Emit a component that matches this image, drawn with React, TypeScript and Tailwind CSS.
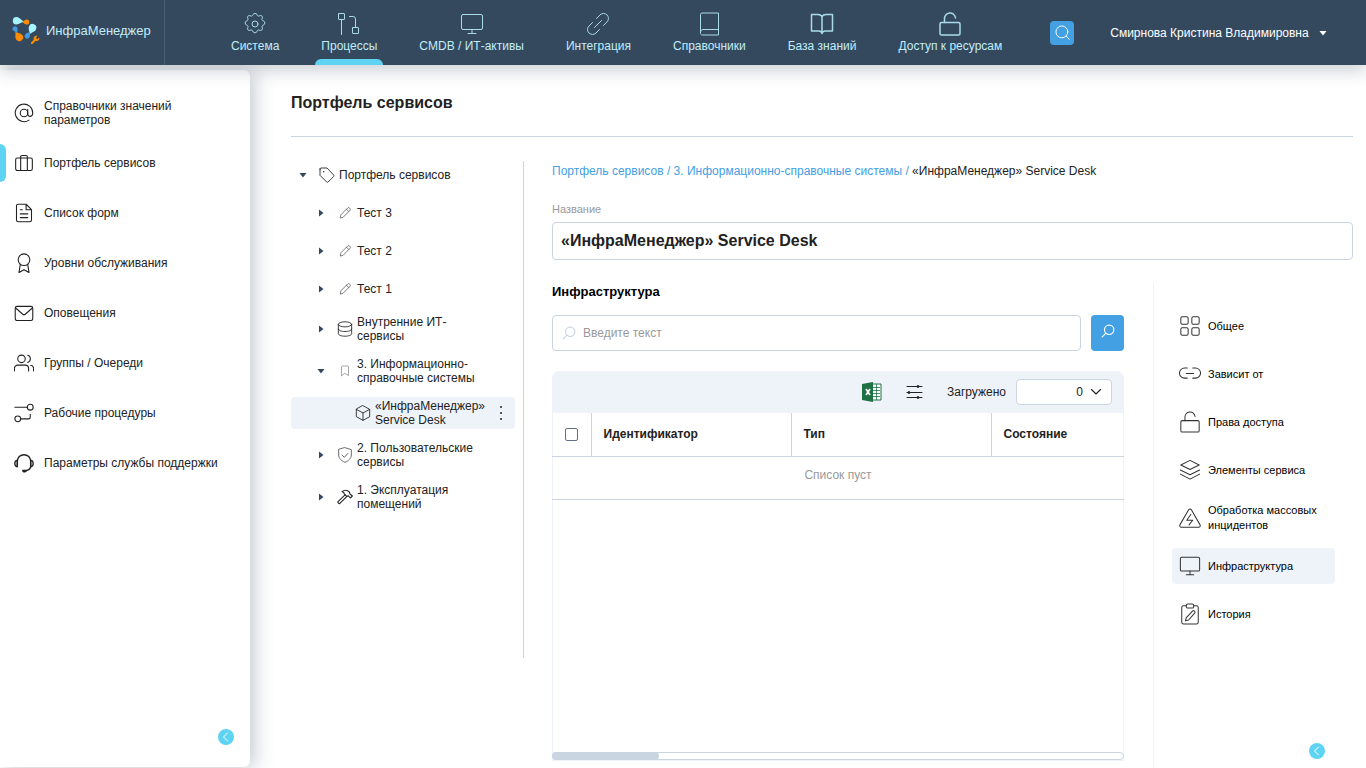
import { useState, type ReactNode } from 'react';
import clsx from 'clsx';

function Icon({ size = 24, width = 1, className, children }: {
  size?: number;
  width?: number;
  className?: string;
  children: ReactNode;
}) {
  return (
    <svg
      width={size}
      height={size}
      viewBox="0 0 24 24"
      fill="none"
      stroke="currentColor"
      strokeWidth={width}
      strokeLinecap="round"
      strokeLinejoin="round"
      className={clsx('shrink-0', className)}
      aria-hidden="true"
    >
      {children}
    </svg>
  );
}

const gear = (
  <>
    <circle cx="12" cy="12" r="3" />
    <path d="M10.2 2.2c.5-1 3.100-1 3.600 0l.5 1.100c.3.700 1.100 1 1.800.7l1.100-.4c1.300-.4 2.600.9 2.200 2.200l-.4 1.100c-.3.700.1 1.500.8 1.800l1.100.5c1.200.6 1.200 3 0 3.600l-1.100.5c-.7.3-1 1.100-.8 1.800l.4 1.100c.4 1.300-.9 2.600-2.200 2.200l-1.100-.4c-.7-.3-1.500.1-1.800.8l-.5 1.100c-.6 1.200-3 1.200-3.600 0l-.5-1.100c-.3-.7-1.100-1-1.800-.8l-1.100.4c-1.300.4-2.600-.9-2.200-2.200l.4-1.100c.3-.7-.1-1.500-.8-1.800l-1.100-.5c-1.200-.6-1.200-3 0-3.600l1.100-.5c.7-.3 1-1.100.8-1.800l-.4-1.100c-.4-1.300.9-2.600 2.200-2.200l1.100.4c.7.3 1.500 0 1.800-.7z" />
  </>
);

const flow = (
  <>
    <rect x="1.500" y="1.500" width="6" height="6" rx=".5" />
    <rect x="15.500" y="15.500" width="6" height="6" rx=".5" />
    <path d="M4.500 7.500v15M12.500 4.500h3.500a2.500 2.500 0 0 1 2.500 2.500v8.500" />
  </>
);

const monitor = (
  <>
    <rect x="1.500" y="2.500" width="21" height="15" rx="1.500" />
    <path d="M12 17.500v4M8 21.500h8" />
  </>
);

const chain = (
  <path d="M8.500 15.500l7-7M10.500 6.500l3.500-3.600a4.900 4.900 0 0 1 7 7l-3.500 3.600M6.500 10.500L3 14a4.900 4.900 0 0 0 7 7l3.500-3.500" />
);

const book = (
  <path d="M3.500 20.500V2.500a1.500 1.500 0 0 1 1.500-1.500h16.500v22H5.500a2 2 0 0 1-2-2.500c0-1.500 1-3 2.500-3h15.500" />
);

const openBook = (
  <path d="M12 4.500c-1-1.500-2.500-2-4-2H1.500v16.500H9c1.800 0 2.500 1 3 2.500.5-1.500 1.200-2.500 3-2.500h7.500V2.500H16c-1.500 0-3 .5-4 2v17" />
);

const unlock = (
  <>
    <rect x="2" y="10.500" width="20" height="12.500" rx="1.500" />
    <path d="M6.500 10.500V7a5.500 5.500 0 0 1 11-1" />
  </>
);

const layers = (
  <path d="M12 1.500l10 5-10 5-10-5zM1.500 12L12 17.200 22.500 12M1.500 16.500L12 22l10.500-5.500" />
);

const topNav = [
  { label: 'Система', icon: gear },
  { label: 'Процессы', icon: flow, active: true },
  { label: 'CMDB / ИТ-активы', icon: monitor },
  { label: 'Интеграция', icon: chain },
  { label: 'Справочники', icon: book },
  { label: 'База знаний', icon: openBook, bold: true },
  { label: 'Доступ к ресурсам', icon: unlock, bold: true },
];

const sideNav = [
  {
    label: 'Справочники значений параметров',
    icon: (
      <>
        <circle cx="12" cy="12" r="4.500" />
        <path d="M16.500 7.500V13c0 4.500 6 4 6-1A10.500 10.500 0 1 0 18 20.500" />
      </>
    ),
  },
  {
    label: 'Портфель сервисов',
    active: true,
    icon: (
      <>
        <rect x="2" y="6" width="20" height="15" rx="2" />
        <path d="M8 21V4.500A1.500 1.500 0 0 1 9.500 3h5A1.500 1.500 0 0 1 16 4.500V21" />
      </>
    ),
  },
  {
    label: 'Список форм',
    icon: (
      <path d="M14.500 1.500H5a2 2 0 0 0-2 2v17a2 2 0 0 0 2 2h14a2 2 0 0 0 2-2V8zM14.500 1.500V8H21M7.500 8h2.500M7.500 13h9M7.500 17.500h9" />
    ),
  },
  {
    label: 'Уровни обслуживания',
    icon: (
      <>
        <circle cx="12" cy="8" r="7" />
        <path d="M7.500 13.500L6 23.500l6-3.500 6 3.500-1.500-10" />
      </>
    ),
  },
  {
    label: 'Оповещения',
    icon: (
      <>
        <rect x="1.500" y="4" width="21" height="17" rx="2" />
        <path d="M2 6l8.500 7.500a2.200 2.200 0 0 0 3 0L22 6" />
      </>
    ),
  },
  {
    label: 'Группы / Очереди',
    icon: (
      <>
        <circle cx="9" cy="7" r="4.500" />
        <path d="M.5 21.500v-3a4 4 0 0 1 4-4h9a4 4 0 0 1 4 4v3M16.500 2.700a4.500 4.500 0 0 1 0 8.600M20 14.800a4 4 0 0 1 3.500 4v2.700" />
      </>
    ),
  },
  {
    label: 'Рабочие процедуры',
    icon: (
      <>
        <circle cx="19.500" cy="5" r="3.500" />
        <circle cx="4.500" cy="19" r="3.500" />
        <path d="M1 5h15M8 19h9.500a2 2 0 0 0 2-2v-3.500" />
      </>
    ),
  },
  {
    label: 'Параметры службы поддержки',
    icon: (
      <>
        <path strokeWidth="1.700" d="M4 16V10a8 8 0 0 1 16 0v6c0 3-2 4.500-5 5" />
        <path strokeWidth="1.600" d="M4 8.500C0 9 0 16 4 16.500zM20 8.500c4 .5 4 7.500 0 8zM10.500 21h4c1 1.500-4 2.500-4 0z" />
      </>
    ),
  },
];

const pencil = <path d="M4 20l1-5L17 3c1.500-1.500 5.500 2.500 4 4L9 19zM14.500 5.500l4 4" />;

type TreeItem = {
  label: string;
  level: number;
  open?: boolean;
  leaf?: boolean;
  selected?: boolean;
  icon: ReactNode;
  size: number;
  tone?: string;
};

const tree: TreeItem[] = [
  {
    label: 'Портфель сервисов',
    level: 0,
    open: true,
    size: 16,
    icon: (
      <>
        <path d="M1.500 3v9.500l10 10c.7.700 1.500.7 2.200 0l8.300-8.300c.7-.7.7-1.500 0-2.200L12 1.500H3A1.500 1.500 0 0 0 1.500 3z" />
        <path strokeWidth="2" d="M7 7v.1" />
      </>
    ),
  },
  { label: 'Тест 3', level: 1, size: 14, icon: pencil, tone: 'text-[#555]' },
  { label: 'Тест 2', level: 1, size: 14, icon: pencil, tone: 'text-[#555]' },
  { label: 'Тест 1', level: 1, size: 14, icon: pencil, tone: 'text-[#555]' },
  {
    label: 'Внутренние ИТ-сервисы',
    level: 1,
    size: 16,
    icon: (
      <>
        <ellipse cx="12" cy="5" rx="10" ry="3.800" />
        <path d="M2 5v14c0 2.200 4.500 3.800 10 3.800s10-1.600 10-3.800V5M2 12c0 2.200 4.500 3.800 10 3.800s10-1.600 10-3.800" />
      </>
    ),
  },
  {
    label: '3. Информационно-справочные системы',
    level: 1,
    open: true,
    size: 12,
    tone: 'text-[#777]',
    icon: <path d="M5 21V4a2 2 0 0 1 2-2h10a2 2 0 0 1 2 2v17l-7-4z" />,
  },
  {
    label: '«ИнфраМенеджер» Service Desk',
    level: 2,
    leaf: true,
    selected: true,
    size: 16,
    icon: <path d="M12 1l10 5.500v11L12 23 2 17.500v-11zM2 6.500L12 12l10-5.500M12 12v11" />,
  },
  {
    label: '2. Пользовательские сервисы',
    level: 1,
    size: 16,
    tone: 'text-[#555]',
    icon: <path d="M12 1l9.500 3v8c0 5-4.500 9-9.500 11-5-2-9.500-6-9.500-11V4zM7.500 12l3.500 3.500 5.500-6" />,
  },
  {
    label: '1. Эксплуатация помещений',
    level: 1,
    size: 16,
    icon: (
      <path
        strokeWidth="1.600"
        d="M12.500 8.500L1.500 19c-.8 1 1.500 3.500 2.700 2.700L15 11M7.500 4c4-3 8-2.500 11 .5l1 3 3.500 3-3 3-3-3.200-2.500.7-4-4C11 5.500 9.500 4.500 7.500 4z"
      />
    ),
  },
];

const sections = [
  {
    label: 'Общее',
    icon: (
      <>
        <rect x="2" y="2" width="8" height="8" rx="1.500" />
        <rect x="14" y="2" width="8" height="8" rx="1.500" />
        <rect x="2" y="14" width="8" height="8" rx="1.500" />
        <rect x="14" y="14" width="8" height="8" rx="1.500" />
      </>
    ),
  },
  {
    label: 'Зависит от',
    icon: <path d="M9 5.500H6a5.500 5.500 0 0 0 0 11h3M15 5.500h3a5.500 5.500 0 0 1 0 11h-3M8 11.500h8" />,
  },
  { label: 'Права доступа', icon: unlock },
  { label: 'Элементы сервиса', icon: layers },
  {
    label: 'Обработка массовых инцидентов',
    icon: (
      <path d="M10.500 3a1.800 1.800 0 0 1 3 0l9.500 16.500a1.700 1.700 0 0 1-1.500 2.500h-19A1.700 1.700 0 0 1 1 19.500zM13 8l-4.500 6.500H15L11 19.500" />
    ),
  },
  { label: 'Инфраструктура', icon: monitor, active: true },
  {
    label: 'История',
    icon: (
      <>
        <path d="M8 3H5a2 2 0 0 0-2 2v16a2 2 0 0 0 2 2h14a2 2 0 0 0 2-2V5a2 2 0 0 0-2-2h-3" />
        <rect x="8" y="1" width="8" height="4.500" rx="1.500" />
        <path d="M7 19.500l1-3.500 7-7.500c1-1 3.300 1 2.300 2.200L10.500 18.500z" />
      </>
    ),
  },
];

// Teardrop: a round end of radius r with its tip `len` away, turned by `angle`
function Drop({ x, y, r, len, angle, fill }: {
  x: number;
  y: number;
  r: number;
  len: number;
  angle: number;
  fill: string;
}) {
  const d = `M${len} 0C${len * 0.7} 0 ${r * 0.8} ${r} 0 ${r}A${r} ${r} 0 0 1 0 ${-r}C${r * 0.8} ${-r} ${len * 0.7} 0 ${len} 0z`;
  return <path d={d} fill={fill} transform={`translate(${x} ${y}) rotate(${angle})`} />;
}

function Logo() {
  return (
    <svg width="30" height="30" viewBox="0 0 30 30" className="shrink-0" aria-hidden="true">
      <Drop x={5.5} y={4.700} r={3.700} len={8} angle={5} fill="#a5f3fc" />
      <Drop x={15.700} y={6} r={2.600} len={5} angle={180} fill="#ff8c00" />
      <Drop x={21.500} y={11.800} r={3.800} len={7.500} angle={115} fill="#a5f3fc" />
      <Drop x={16.300} y={20} r={2.600} len={5.500} angle={-60} fill="#4299e1" />
      <Drop x={8.300} y={21.300} r={3.800} len={7.500} angle={-125} fill="#ff8c00" />
      <Drop x={4} y={12.800} r={2.500} len={5.500} angle={60} fill="#4299e1" />
      <path
        d="M28.200 21.500l-2 1.700-1.300-1.300 1.500-2.200c-2.600-.5-4.400 1.700-3.600 4L20 26.500c-.4 1.300.4 2 1.500 1.500l3-3c2.500.6 4.500-1.200 3.700-3.500z"
        fill="#ff8c00"
      />
    </svg>
  );
}

function ExcelIcon() {
  return (
    <svg width="20" height="22" viewBox="0 0 20 22" aria-hidden="true">
      <path d="M10 3h9v16h-9z" fill="#fff" stroke="#1e7145" />
      <path d="M10 6.500h8M10 9.500h8M10 12.500h8M10 15.500h8M14.500 3v16" stroke="#1e7145" strokeWidth=".8" />
      <path d="M0 3L11 1v20L0 19z" fill="#1e7145" />
      <path d="M4 8l4 6M8 8l-4 6" stroke="#fff" strokeWidth="1.600" />
    </svg>
  );
}

function CollapseButton({ label }: { label: string }) {
  return (
    <button type="button" aria-label={label} className="flex size-4 items-center justify-center rounded-full bg-[#5fd4f2] text-white">
      <Icon size={12} width={2}>
        <path d="M15 4l-8 8 8 8" />
      </Icon>
    </button>
  );
}

function Magnifier({ size, className }: { size: number; className?: string }) {
  return (
    <Icon size={size} width={2} className={className}>
      <circle cx="14" cy="10" r="8" />
      <path d="M8.500 15.500L2 22" />
    </Icon>
  );
}

function TreeCaret({ open }: { open?: boolean }) {
  return (
    <svg width="8" height="8" viewBox="0 0 8 8" fill="#34495e" aria-hidden="true">
      <path d={open ? 'M.5 2h7L4 6.500z' : 'M2 .5v7L6.500 4z'} />
    </svg>
  );
}

function Header() {
  return (
    <header className="relative z-10 flex h-[65px] shrink-0 bg-[#34495e] shadow-[0_6px_16px_rgba(52,73,94,0.25)]">
      <a href="#home" className="flex w-[165px] shrink-0 items-center gap-[5px] border-r border-[#475d73] pb-1 pl-[11px] text-[13px] text-[#c4ecf7]">
        <Logo />
        ИнфраМенеджер
      </a>
      <nav className="ml-[60px] flex gap-[30px]">
        {topNav.map((item) => (
          <a
            key={item.label}
            href="#section"
            className="relative flex flex-col items-center gap-0.5 px-1.5 pt-3 text-xs whitespace-nowrap text-[#c0edfa]"
          >
            <Icon width={item.bold ? 1.5 : 1} className="text-[#a9dbea]">{item.icon}</Icon>
            {item.label}
            {item.active && <span className="absolute inset-x-0 bottom-0 h-1.5 rounded-t-md bg-[#5fd4f2]" />}
          </a>
        ))}
      </nav>
      <button
        type="button"
        aria-label="Поиск"
        className="ml-[42px] flex size-6 shrink-0 items-center justify-center self-center rounded-sm bg-[#43a0e3] text-white"
      >
        <Icon size={15} width={1.5}>
          <circle cx="11" cy="11" r="9.500" />
          <path d="M18 18l5 5" />
        </Icon>
      </button>
      <button type="button" className="ml-9 flex items-center gap-2.5 text-xs whitespace-nowrap text-white">
        Смирнова Кристина Владимировна
        <svg width="8" height="8" viewBox="0 0 8 8" fill="currentColor" aria-hidden="true">
          <path d="M.5 2h7L4 6.500z" />
        </svg>
      </button>
    </header>
  );
}

function Sidebar() {
  return (
    <aside className="mt-[5px] mb-px flex w-[250px] shrink-0 flex-col rounded-r-md bg-white pt-[18px] shadow-[4px_2px_20px_rgba(52,73,94,0.3)]">
      <nav>
        {sideNav.map((item) => (
          <a key={item.label} href="#item" className="relative flex h-[50px] items-center gap-2.5 pr-4 pl-3.5 text-xs leading-[14px]">
            {item.active && <span className="absolute top-1.5 left-0 h-[38px] w-1.5 rounded-r-md bg-[#5fd4f2]" />}
            <Icon size={20} width={1.3}>{item.icon}</Icon>
            {item.label}
          </a>
        ))}
      </nav>
      <div className="mt-auto flex justify-end pr-4 pb-[22px]">
        <CollapseButton label="Свернуть меню" />
      </div>
    </aside>
  );
}

const indent = ['pl-[3px]', 'pl-[21px]', 'pl-[39px]'];

function ServiceTree() {
  return (
    <div className="h-[497px] w-[233px] shrink-0 border-r border-[#c9d5e1] pr-2">
      <ul className="flex flex-col gap-2.5">
        {tree.map((item) => (
          <li
            key={item.label}
            className={clsx(
              'flex min-h-7 items-center rounded-sm py-0.5 text-xs leading-[14px]',
              indent[item.level],
              item.selected && 'bg-[#eef3fa]',
            )}
          >
            {item.leaf ? (
              <span className="w-[18px]" />
            ) : (
              <button type="button" aria-label="Развернуть" aria-expanded={!!item.open} className="flex w-[18px] justify-center">
                <TreeCaret open={item.open} />
              </button>
            )}
            <span className={clsx('ml-1.5 flex w-[18px] shrink-0 justify-center', item.tone)}>
              <Icon size={item.size} width={1.3}>{item.icon}</Icon>
            </span>
            <a href="#service" className="ml-[3px] min-w-0 flex-1">{item.label}</a>
            {item.selected ? (
              <button type="button" aria-label="Действия" className="flex w-7 justify-center">
                <svg width="4" height="16" viewBox="0 0 4 16" fill="#222" aria-hidden="true">
                  <circle cx="2" cy="2" r="1" />
                  <circle cx="2" cy="8" r="1" />
                  <circle cx="2" cy="14" r="1" />
                </svg>
              </button>
            ) : (
              <span className="w-7 shrink-0" />
            )}
          </li>
        ))}
      </ul>
    </div>
  );
}

function InfrastructureTable() {
  return (
    <div className="mt-5 flex flex-1 flex-col overflow-hidden rounded-t-lg shadow-[inset_0_0_0_1px_#eef3fa]">
      <div className="flex h-[42px] shrink-0 items-center justify-end bg-[#eef3fa] pr-3">
        <button type="button" aria-label="Экспорт в Excel" className="mr-6">
          <ExcelIcon />
        </button>
        <button type="button" aria-label="Настройка колонок" className="mr-6">
          <svg width="17" height="16" viewBox="0 0 17 16" stroke="#222" fill="#222" strokeLinecap="round" aria-hidden="true">
            <path d="M1 2.500h15M1 8.500h15M1 13.500h15" />
            <circle cx="12" cy="2.500" r="1" />
            <circle cx="3" cy="8.500" r="1" />
            <circle cx="12" cy="13.500" r="1" />
          </svg>
        </button>
        <label htmlFor="loaded" className="mr-2.5 text-xs">Загружено</label>
        <div className="relative">
          <select
            id="loaded"
            className="h-[26px] w-24 appearance-none rounded-sm border border-[#c9d5e1] bg-white pr-7 text-xs [text-align-last:right]"
          >
            <option>0</option>
          </select>
          <Icon size={12} width={2.2} className="pointer-events-none absolute top-[7px] right-2.5">
            <path d="M3 7l9 9 9-9" />
          </Icon>
        </div>
      </div>
      <table className="w-full table-fixed text-xs">
        <thead>
          <tr className="h-[43px] border-b border-[#c9d5e1] text-left">
            <th className="w-[39px]">
              <input
                type="checkbox"
                aria-label="Выбрать все"
                className="mx-auto block size-[13px] appearance-none rounded-xs border border-[#5f7285] bg-white"
              />
            </th>
            <th className="w-[200px] border-l border-[#c9d5e1] px-3">Идентификатор</th>
            <th className="w-[200px] border-l border-[#c9d5e1] px-3">Тип</th>
            <th className="border-l border-[#c9d5e1] px-3">Состояние</th>
          </tr>
        </thead>
        <tbody>
          <tr className="h-[43px] border-b border-[#c9d5e1]">
            <td colSpan={4} className="pb-1.5 text-center text-[#999]">Список пуст</td>
          </tr>
        </tbody>
      </table>
      <div className="mt-auto mb-px h-2 rounded-full border border-[#c9d5e1]">
        <div className="-mt-px -ml-px h-2 w-[107px] rounded-full bg-[#c9d5e1]" />
      </div>
    </div>
  );
}

function SectionNav() {
  return (
    <aside className="ml-[29px] flex w-[200px] shrink-0 flex-col border-l border-[#f0f2f5] pt-[25px] pr-[18px] pl-[18px]">
      <nav className="flex flex-col gap-3">
        {sections.map((item) => (
          <a
            key={item.label}
            href="#tab"
            className={clsx(
              'flex h-9 items-center gap-2 rounded-sm pr-1 pl-[7px] text-[11px] leading-[15px] text-black',
              item.active && 'bg-[#eef3fa]',
            )}
          >
            <Icon size={22} width={1.1} className="-mr-px text-[#333]">{item.icon}</Icon>
            {item.label}
          </a>
        ))}
      </nav>
      <div className="mt-auto flex justify-end pr-2.5 pb-[9px]">
        <CollapseButton label="Свернуть панель" />
      </div>
    </aside>
  );
}

export default function App() {
  const [name, setName] = useState('«ИнфраМенеджер» Service Desk');
  const [query, setQuery] = useState('');

  return (
    <div className="flex min-h-screen flex-col bg-white font-['Liberation_Sans',Arial,sans-serif] text-[#222]">
      <Header />
      <div className="flex flex-1">
        <Sidebar />
        <main className="flex min-w-0 flex-1 flex-col pr-[13px] pl-[41px]">
          <h1 className="border-b border-[#c9d5e1] pt-7 pb-[23px] text-base leading-5 font-bold">Портфель сервисов</h1>
          <div className="flex flex-1 pt-6">
            <ServiceTree />
            <section className="ml-7 flex min-w-0 flex-1 flex-col">
              <div className="pt-0.5 text-xs text-[#222]">
                <a href="#portfolio" className="text-[#43a0e3]">Портфель сервисов / </a>
                <a href="#systems" className="text-[#43a0e3]">3. Информационно-справочные системы / </a>
                <span>«ИнфраМенеджер» Service Desk</span>
              </div>
              <label htmlFor="name" className="mt-[22px] text-[11px] leading-4 text-[#999]">Название</label>
              <input
                id="name"
                value={name}
                onChange={(e) => setName(e.target.value)}
                className="mt-[5px] h-[38px] rounded-sm border border-[#c9d5e1] px-2 text-base font-bold"
              />
              <div className="mt-[23px] flex flex-1">
                <div className="flex min-w-0 flex-1 flex-col pb-[7px]">
                  <h2 className="text-[13px] leading-[18px] font-bold text-black">Инфраструктура</h2>
                  <div className="mt-3.5 flex gap-2.5">
                    <div className="relative flex-1">
                      <Magnifier size={14} className="absolute top-[11px] left-2.5 text-[#c9d5e1]" />
                      <input
                        type="search"
                        aria-label="Поиск по списку"
                        placeholder="Введите текст"
                        value={query}
                        onChange={(e) => setQuery(e.target.value)}
                        className="h-9 w-full rounded-sm border border-[#c9d5e1] pr-2 pl-[30px] text-xs placeholder:text-[#999]"
                      />
                    </div>
                    <button type="button" aria-label="Найти" className="flex h-9 w-[33px] items-center justify-center rounded-sm bg-[#43a0e3] pb-1 text-white">
                      <Magnifier size={14} />
                    </button>
                  </div>
                  <InfrastructureTable />
                </div>
                <SectionNav />
              </div>
            </section>
          </div>
        </main>
      </div>
    </div>
  );
}
